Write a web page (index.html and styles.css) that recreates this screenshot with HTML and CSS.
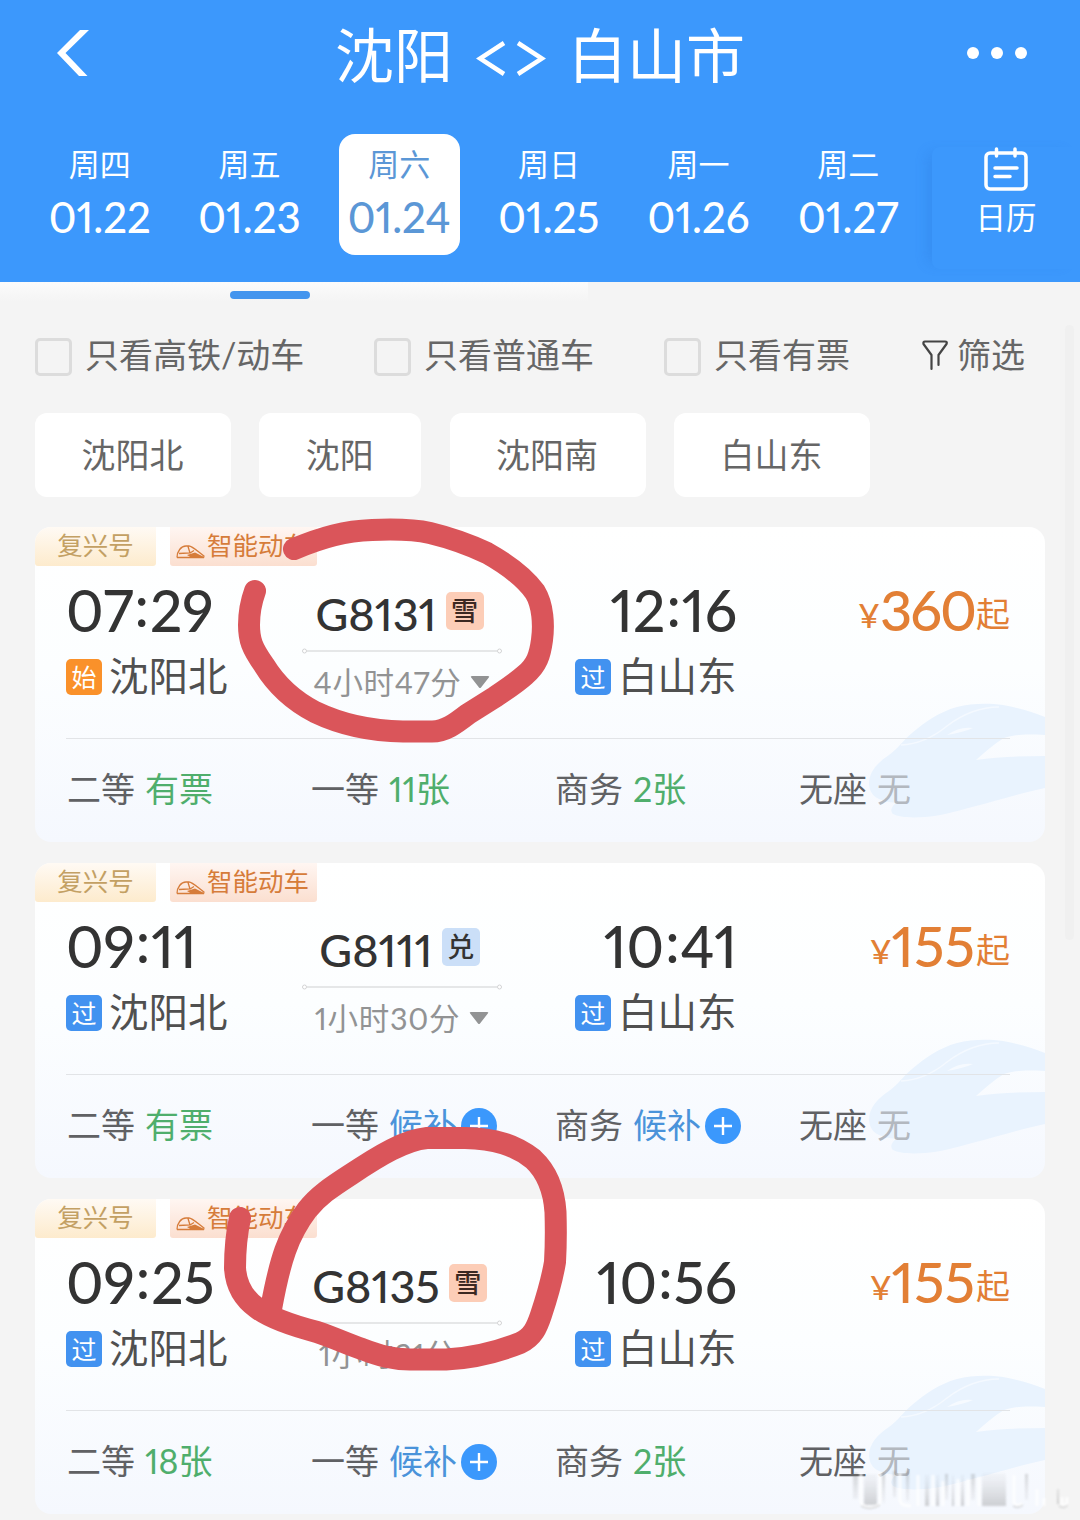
FILE: index.html
```
<!DOCTYPE html>
<html lang="zh-CN">
<head>
  <meta charset="UTF-8" />
  <title>沈阳 - 白山市</title>
  <link rel="stylesheet" href="styles.css">
</head>
<body>

  <!-- shared icons -->
  <svg class="defs" width="0" height="0">
    <symbol id="emu" viewBox="0 0 30 16">
      <path d="M1 13.500C1 7.500 5 2 10 2H13C16 2 20 6 28.500 12.500M1 13.500H28M3 9.500L14 9L12 2.500M14 9L18 6.500" fill="none" stroke="currentColor" stroke-width="1.300"/>
      <path d="M11 11L19 8.500L29 13.500H15Z" fill="currentColor"/>
    </symbol>
    <symbol id="route" viewBox="0 0 200 6">
      <path d="M5 3H195" stroke="#dedfe0" stroke-width="1.500"/>
      <circle cx="2.500" cy="3" r="2" fill="#fff" stroke="#d2d3d4"/>
      <circle cx="197.500" cy="3" r="2" fill="#fff" stroke="#d2d3d4"/>
    </symbol>
    <symbol id="down" viewBox="0 0 20 14">
      <path d="M2 1H18Q20 1 18.800 2.500L11 12.500Q10 13.600 9 12.500L1.200 2.500Q0 1 2 1Z" fill="#929394"/>
    </symbol>
    <symbol id="plus" viewBox="0 0 36 36">
      <circle cx="18" cy="18" r="18" fill="#3b98fc"/>
      <path d="M9 18H27M18 9V27" stroke="#fff" stroke-width="2.400"/>
    </symbol>
    <symbol id="train-bg" viewBox="0 0 178 120">
      <path d="M2 84C2 72 10 63 22 55C32 48 36 40 45 33C58 22 72 12 90 7C105 3 122 3 136 5C152 8 166 12 178 17V35C160 34 148 34 137 38C127 44 118 52 109 60C130 57 155 56 178 56V88C150 94 130 101 105 107C88 112 72 116 58 117C42 118 32 117 26 114C23 111 24 107 29 103C14 101 3 98 2 84Z" fill="#e9f3fe"/>
      <path d="M34 45Q58 44 80 26Q105 7 132 7" fill="none" stroke="#f4f9ff" stroke-width="1.500"/>
      <path d="M80 35Q93 26 106 28Q97 32 80 35Z" fill="#f6faff"/>
    </symbol>
  </svg>

  <header>
    <div class="title-bar">
      <svg class="back" viewBox="0 0 34 48"><path d="M33 1H24L1 24L23 47H31.500L9.500 24Z" fill="#fff"/></svg>
      <h1>沈阳 <svg class="swap" viewBox="0 0 70 36"><path d="M28 2L4 17.500L28 33M42 2L66 17.500L42 33" fill="none" stroke="#fff" stroke-width="4.500"/></svg> 白山市</h1>
      <svg class="more" viewBox="0 0 60 14"><circle cx="6" cy="7" r="6"/><circle cx="30" cy="7" r="6"/><circle cx="54" cy="7" r="6"/></svg>
    </div>
    <nav>
      <div class="days">
        <div class="day"><span>周四</span><b>01.22</b></div>
        <div class="day"><span>周五</span><b>01.23</b></div>
        <div class="day active"><span>周六</span><b>01.24</b></div>
        <div class="day"><span>周日</span><b>01.25</b></div>
        <div class="day"><span>周一</span><b>01.26</b></div>
        <div class="day"><span>周二</span><b>01.27</b></div>
      </div>
      <div class="calendar">
        <svg viewBox="0 0 44 44" fill="none" stroke="#fff" stroke-width="3.500" stroke-linecap="round">
          <rect x="2" y="6" width="40" height="36" rx="4"/>
          <path d="M12.500 2V9M31 2V9M11 21H33M11 29.500H26"/>
        </svg>
        <span>日历</span>
      </div>
    </nav>
  </header>

  <div class="tab-edge"><i></i></div>

  <main>
    <div class="filters">
      <label class="f1"><i></i>只看高铁/动车</label>
      <label class="f2"><i></i>只看普通车</label>
      <label class="f3"><i></i>只看有票</label>
      <div class="screen">
        <svg viewBox="0 0 26 31" fill="none" stroke-width="2.200" stroke-linecap="round" stroke-linejoin="round">
          <path d="M9.500 29V15L1.500 4Q1 1.500 3 1.500H23Q25.500 1.500 24.500 4L16.500 15V25" stroke="#444"/>
        </svg>
        筛选
      </div>
    </div>

    <div class="stations">
      <button>沈阳北</button>
      <button class="short">沈阳</button>
      <button>沈阳南</button>
      <button>白山东</button>
    </div>

    <section class="card">
      <svg class="train-bg"><use href="#train-bg"/></svg>
      <div class="tags">
        <span class="tag fx">复兴号</span>
        <span class="tag zn"><svg><use href="#emu"/></svg>智能动车</span>
      </div>
      <div class="trip">
        <div class="stop">
          <div class="time">07<s>:</s>29</div>
          <div class="place"><i class="start">始</i>沈阳北</div>
        </div>
        <div class="middle">
          <div class="number">G8131<i class="snow">雪</i></div>
          <svg class="route"><use href="#route"/></svg>
          <div class="duration">4小时47分<svg><use href="#down"/></svg></div>
        </div>
        <div class="stop arrive">
          <div class="time">12<s>:</s>16</div>
          <div class="place"><i>过</i>白山东</div>
        </div>
        <div class="price"><small>¥</small><span class="tight">360</span><em>起</em></div>
      </div>
      <div class="seats">
        <div>二等 <span class="ok">有票</span></div>
        <div>一等 <span class="ok">11张</span></div>
        <div>商务 <span class="ok">2张</span></div>
        <div>无座 <span class="none">无</span></div>
      </div>
    </section>

    <section class="card">
      <svg class="train-bg"><use href="#train-bg"/></svg>
      <div class="tags">
        <span class="tag fx">复兴号</span>
        <span class="tag zn"><svg><use href="#emu"/></svg>智能动车</span>
      </div>
      <div class="trip">
        <div class="stop">
          <div class="time">09<s>:</s>11</div>
          <div class="place"><i>过</i>沈阳北</div>
        </div>
        <div class="middle">
          <div class="number">G8111<i>兑</i></div>
          <svg class="route"><use href="#route"/></svg>
          <div class="duration">1小时30分<svg><use href="#down"/></svg></div>
        </div>
        <div class="stop arrive">
          <div class="time">10<s>:</s>41</div>
          <div class="place"><i>过</i>白山东</div>
        </div>
        <div class="price"><small>¥</small>155<em>起</em></div>
      </div>
      <div class="seats">
        <div>二等 <span class="ok">有票</span></div>
        <div>一等 <span class="wait">候补<svg><use href="#plus"/></svg></span></div>
        <div>商务 <span class="wait">候补<svg><use href="#plus"/></svg></span></div>
        <div>无座 <span class="none">无</span></div>
      </div>
    </section>

    <section class="card">
      <svg class="train-bg"><use href="#train-bg"/></svg>
      <div class="tags">
        <span class="tag fx">复兴号</span>
        <span class="tag zn"><svg><use href="#emu"/></svg>智能动车</span>
      </div>
      <div class="trip">
        <div class="stop">
          <div class="time">09<s>:</s>25</div>
          <div class="place"><i>过</i>沈阳北</div>
        </div>
        <div class="middle">
          <div class="number">G8135<i class="snow">雪</i></div>
          <svg class="route"><use href="#route"/></svg>
          <div class="duration">1小时31分<svg><use href="#down"/></svg></div>
        </div>
        <div class="stop arrive">
          <div class="time">10<s>:</s>56</div>
          <div class="place"><i>过</i>白山东</div>
        </div>
        <div class="price"><small>¥</small>155<em>起</em></div>
      </div>
      <div class="seats">
        <div>二等 <span class="ok">18张</span></div>
        <div>一等 <span class="wait">候补<svg><use href="#plus"/></svg></span></div>
        <div>商务 <span class="ok">2张</span></div>
        <div>无座 <span class="none">无</span></div>
      </div>
    </section>
  </main>

  <div class="scrollbar"></div>

  <!-- hand drawn marks over the list -->
  <svg class="marks" viewBox="0 0 1080 1520" fill="none" stroke="#da555a" stroke-width="22" stroke-linecap="round" stroke-linejoin="round">
    <path d="M294 549C323 537 345 531 372 530C395 529 412 529 430 533C455 539 470 545 487 553C510 566 525 578 535 592C543 605 544 625 542 640C540 655 537 665 525 675C515 684 505 690 495 697L468 714C455 724 445 731.500 432 731.500H403C370 731 340 724 315 712C290 699 275 683 264 665C252 648 249 640 249 625C249 612 251 602 255 591"/>
    <path d="M240 1218C236 1236 235 1250 235 1268C236 1285 243 1298 257 1308C270 1318 290 1325 317 1332C335 1338 347 1344 362 1349C380 1356 392 1359 410 1359.500H446C475 1358 500 1351 520 1343C533 1337 537 1327 541 1315C547 1297 552 1280 555 1262C556 1245 556 1228 555.500 1212C554 1190 547 1172 533 1159C515 1145 495 1138.500 465 1138H427C405 1140 380 1155 350 1175C330 1188 318 1196 307 1210C288 1235 280 1260 271 1309"/>
  </svg>

  <svg class="smear" viewBox="0 0 220 40">
    <defs>
      <linearGradient id="fade" x1="0" y1="0" x2="0" y2="1">
        <stop offset="0" stop-color="#777" stop-opacity=".3"/>
        <stop offset="1" stop-color="#999" stop-opacity=".06"/>
      </linearGradient>
      <linearGradient id="fade-up" x1="0" y1="0" x2="0" y2="1">
        <stop offset="0" stop-color="#999" stop-opacity=".04"/>
        <stop offset="1" stop-color="#777" stop-opacity=".32"/>
      </linearGradient>
    </defs>
    <path d="M2 2h5v26h-5zM31 2h3v30h-3zM42 0h3v26h-3zM55 0h3v30h-3zM94 3h3v26h-3zM120 3h4v26h-4zM174 3h3v26h-3z" fill="url(#fade)"/>
    <path d="M13 3h13v31h-13zM74 4h4v31h-4zM85 4h3v31h-3zM101 4h2v31h-2zM110 4h3v31h-3zM131 2h24v33h-24zM206 18h2v15h-2z" fill="url(#fade-up)"/>
    <path d="M10 2V31Q11 36 19 36Q28 36 29 31V2M49 2V30Q50 35 60 35M67 4V35M82 4V35M92 10V35M107 8V35M117 8V35M128 6V35M163 4V32Q168 37 171 32M186 18V35M193 27V35M211 26V34H216V26" fill="none" stroke="#fff" stroke-width="3" stroke-opacity=".8"/>
    <path d="M10 35Q19 40 29 34M162 35Q167 38 172 34M208 35Q213 38 217 34" fill="none" stroke="#aaa" stroke-width="1" stroke-opacity=".7"/>
  </svg>

</body>
</html>
```
FILE: styles.css
```
* {
  box-sizing: border-box;
}

body {
  position: relative;
  width: 1080px;
  height: 1520px;
  margin: 0;
  overflow: hidden;
  background: #f4f4f4;
  color: #666;
  font-family: Lato, 'Noto Sans CJK SC', sans-serif;
  font-variant-numeric: proportional-nums;
}

i, em {
  font-style: normal;
}

svg {
  display: block;
  flex: none;
}

.defs {
  position: absolute;
}

/* header */
header {
  height: 282px;
  background: #3c98fc;
  color: #fff;
}

.title-bar {
  display: flex;
  align-items: center;
  justify-content: space-between;
  height: 110px;
  padding: 0 52px 4px 56px;
}

.back {
  width: 34px;
  height: 48px;
}

h1 {
  display: flex;
  align-items: center;
  margin: 6px 0 0 24px;
  font-size: 59px;
  font-weight: 400;
  line-height: 80px;
}

.swap {
  width: 70px;
  height: 36px;
  margin: 6px 22px 0 23px;
}

.more {
  width: 62px;
  height: 14px;
  fill: #fff;
}

nav {
  display: flex;
  padding-top: 24px;
}

.days {
  display: grid;
  grid-template-columns: repeat(6, 149.7px);
  justify-items: center;
  width: 932px;
  padding-left: 25px;
}

.day {
  display: flex;
  flex-direction: column;
  align-items: center;
  width: 121px;
  height: 121px;
  border-radius: 16px;
}

.day span {
  margin-top: 9px;
  font-size: 31px;
  line-height: 42px;
}

.day b {
  margin-top: 6px;
  font-size: 42px;
  font-weight: 500;
  line-height: 52px;
}

.day.active {
  background: #fff;
  color: #5b97d6;
}

.calendar {
  display: flex;
  flex-direction: column;
  align-items: center;
  width: 148px;
  height: 122px;
  margin-top: 13px;
  border-radius: 8px 0 0 8px;
  box-shadow: -10px 0 14px -6px rgba(30, 100, 200, 0.2);
}

.calendar svg {
  width: 44px;
  height: 44px;
}

.calendar span {
  margin-top: 4px;
  font-size: 30.5px;
  line-height: 44px;
}

.tab-edge {
  display: flex;
  justify-content: center;
  width: 588px;
  height: 20px;
  padding: 9px 48px 0 0;
  background: linear-gradient(#fbfbfb, #f4f4f4);
}

.tab-edge i {
  width: 80px;
  height: 8px;
  border-radius: 4px;
  background: #4495ee;
}

/* filters */
main {
  padding: 0 35px;
}

.filters {
  display: flex;
  height: 111px;
  padding-top: 26px;
  font-size: 34px;
  line-height: 54px;
  white-space: nowrap;
}

.filters label {
  display: flex;
}

.filters i {
  width: 37px;
  height: 38px;
  margin: 10px 13px 0 0;
  border: 3px solid #dcdcdc;
  border-radius: 5px;
}

.f1 {
  width: 339px;
}

.f2 {
  width: 290px;
}

.f3 {
  width: 258px;
}

.screen {
  display: flex;
}

.screen svg {
  width: 26px;
  height: 31px;
  margin: 12px 9px 0 0;
}

.stations {
  display: flex;
  gap: 28.3px;
  margin-bottom: 30px;
}

button {
  width: 196px;
  height: 84px;
  padding: 0 1px 4px 0;
  border: none;
  border-radius: 12px;
  background: #fff;
  color: #666;
  font: inherit;
  font-size: 34px;
}

.short {
  width: 162px;
}

/* train cards */
.card {
  position: relative;
  height: 315px;
  margin-bottom: 21px;
  overflow: hidden;
  border-radius: 16px;
  background: linear-gradient(#fff 0%, #fcfeff 45%, #f5f8fe 100%);
}

.train-bg {
  position: absolute;
  right: 0;
  top: 173px;
  width: 178px;
  height: 120px;
}

.tags {
  display: flex;
  gap: 14px;
  height: 39px;
}

.tag {
  display: flex;
  justify-content: center;
  font-size: 25.5px;
  line-height: 37px;
}

.fx {
  width: 121px;
  border-radius: 0 0 3px 3px;
  background: linear-gradient(#fffaf4, #fdebcd);
  color: #c3a063;
}

.zn {
  width: 147px;
  padding-right: 2px;
  border-radius: 0 0 3px 3px;
  background: linear-gradient(#fff6f2, #fbdfd0);
  color: #d67c3a;
}

.zn svg {
  width: 30px;
  height: 16px;
  margin: 17px 1px 0 0;
}

.trip {
  position: relative;
  display: flex;
  height: 173px;
  margin: 0 35px 0 31px;
  border-bottom: 1px solid #e2e4e7;
}

.stop {
  width: 236px;
}

.time {
  height: 72px;
  margin-top: 8px;
  color: #333;
  font-size: 57px;
  font-weight: 500;
  line-height: 72px;
}

/* colon sits at mid height between the digits */
.time s {
  position: relative;
  top: -5px;
  margin: 0 1px;
  text-decoration: none;
}

.place {
  display: flex;
  align-items: center;
  height: 60px;
  color: #505050;
  font-size: 39.5px;
  line-height: 56px;
  padding-bottom: 1px;
}

.place i {
  width: 36px;
  height: 36px;
  margin: 2px 7px 0 0;
  border-radius: 5px;
  background: #4292f0;
  color: #fff;
  font-size: 25px;
  line-height: 36px;
  text-align: center;
}

.place .start {
  background: #fa912a;
}

.middle {
  display: flex;
  flex-direction: column;
  align-items: center;
  width: 200px;
}

.number {
  display: flex;
  align-items: center;
  height: 60px;
  margin-top: 18px;
  padding-right: 5px;
  color: #333;
  font-size: 45px;
  font-weight: 500;
}

.number i {
  width: 38px;
  height: 38px;
  margin: 0 0 6px 9px;
  border-radius: 5px;
  background: #cbdff8;
  font-size: 27px;
  line-height: 38px;
  text-align: center;
}

.number .snow {
  background: #fccdb7;
  color: #3b2822;
}

.route {
  width: 200px;
  height: 6px;
  margin-top: 4px;
}

.duration {
  display: flex;
  align-items: center;
  height: 50px;
  margin-top: 2px;
  color: #929394;
  font-size: 30.5px;
  letter-spacing: 0.7px;
  white-space: nowrap;
}

.duration svg {
  width: 20px;
  height: 14px;
  margin: 2px 0 0 9px;
}

.arrive {
  width: 162px;
  margin-left: 73px;
}

.arrive .time {
  text-align: right;
}

.price {
  display: flex;
  align-items: baseline;
  justify-content: flex-end;
  flex: 1;
  height: 72px;
  margin-top: 8px;
  color: #e27f35;
  font-size: 56px;
  font-weight: 500;
  line-height: 72px;
}

.price small {
  position: relative;
  top: -3px;
  font-size: 33px;
}

.price em {
  position: relative;
  top: -4px;
  margin-left: 1px;
  font-size: 34px;
  font-weight: 400;
}

.tight {
  letter-spacing: -2px;
}

.seats {
  position: relative;
  display: grid;
  grid-template-columns: repeat(4, 244px);
  padding: 26px 0 0 32px;
  color: #606164;
  font-size: 34px;
  line-height: 48px;
  white-space: nowrap;
}

.seats div {
  display: flex;
  gap: 10px;
}

.ok {
  color: #4fae6c;
}

.wait {
  display: flex;
  align-items: center;
  color: #4a93da;
}

.wait svg {
  width: 36px;
  height: 36px;
  margin: 2px 0 0 4px;
}

.none {
  color: #b3b8bf;
}

/* things lying over the page */
.scrollbar {
  position: absolute;
  left: 1065px;
  top: 325px;
  width: 9px;
  height: 615px;
  border-radius: 5px;
  background: #f0f0f0;
}

.marks {
  position: absolute;
  left: 0;
  top: 0;
  width: 1080px;
  height: 1520px;
}

.smear {
  position: absolute;
  left: 851px;
  top: 1471px;
  width: 220px;
  height: 40px;
  filter: blur(0.8px);
}
```
